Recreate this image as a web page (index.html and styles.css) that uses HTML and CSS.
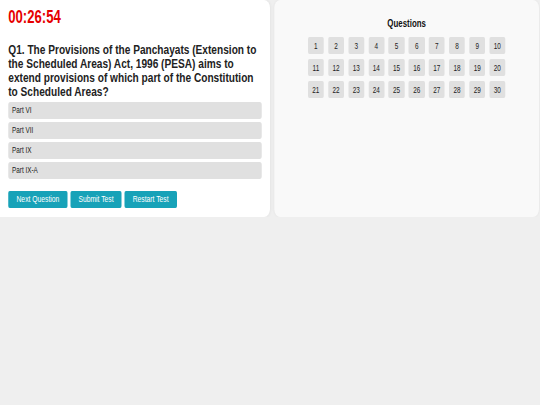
FILE: index.html
```html
<!DOCTYPE html>
<html lang="en">
<head>
    <meta charset="UTF-8" />
    <meta name="viewport" content="width=device-width, initial-scale=1.0" />
    <title>Quiz Test</title>
    <link rel="stylesheet" href="styles.css">
</head>
<body>
    <div class="quiz-layout">

        <!-- Question card -->
        <div class="quiz-card">
            <div class="timer">00:26:54</div>
            <h2 class="question">Q1. The Provisions of the Panchayats (Extension to the Scheduled Areas) Act, 1996 (PESA) aims to extend provisions of which part of the Constitution to Scheduled Areas?</h2>

            <div class="options">
                <div class="option">Part VI</div>
                <div class="option">Part VII</div>
                <div class="option">Part IX</div>
                <div class="option">Part IX-A</div>
            </div>

            <div class="actions">
                <button class="btn">Next Question</button>
                <button class="btn">Submit Test</button>
                <button class="btn">Restart Test</button>
            </div>
        </div>

        <!-- Question navigator -->
        <div class="nav-panel">
            <h3>Questions</h3>
            <div class="q-grid">
                <button>1</button><button>2</button><button>3</button><button>4</button><button>5</button>
                <button>6</button><button>7</button><button>8</button><button>9</button><button>10</button>
                <button>11</button><button>12</button><button>13</button><button>14</button><button>15</button>
                <button>16</button><button>17</button><button>18</button><button>19</button><button>20</button>
                <button>21</button><button>22</button><button>23</button><button>24</button><button>25</button>
                <button>26</button><button>27</button><button>28</button><button>29</button><button>30</button>
            </div>
        </div>

    </div>
</body>
</html>
```

FILE: styles.css
```css
/* --- Reset --- */
* {
    margin: 0;
    padding: 0;
    box-sizing: border-box;
}

body {
    font-family: "Liberation Sans", Arial, sans-serif;
    background-color: #efefef;
    color: #222;
}

/* --- Two column layout ---
   The page is drawn squeezed horizontally, so both columns share one grid
   cell and are narrowed from their own outer edge. */
.quiz-layout {
    display: grid;
    width: 540px;
}

.quiz-card,
.nav-panel {
    grid-area: 1 / 1;
    height: 217px;
    transform: scaleX(0.75);
}

/* --- Question card --- */
.quiz-card {
    justify-self: start;
    width: 360px;
    padding: 7px 11px 0 11px;
    background-color: #fff;
    border-radius: 0 8px 8px 0;
    box-shadow: 0 0 4px rgba(0, 0, 0, 0.08);
    transform-origin: left top;
}

.timer {
    font-size: 17.5px;
    line-height: 20px;
    font-weight: bold;
    color: #e60000;
}

.question {
    margin-top: 15.8px;
    font-size: 13.5px;
    line-height: 14.1px;
    font-weight: bold;
    color: #222;
}

.options {
    display: flex;
    flex-direction: column;
    gap: 3px;
    margin-top: 2.5px;
}

.option {
    height: 17px;
    line-height: 17px;
    padding-left: 5px;
    font-size: 8.5px;
    background-color: #e0e0e0;
    border-radius: 3px;
    color: #222;
}

.actions {
    display: flex;
    gap: 3.5px;
    margin-top: 12px;
}

.btn {
    height: 17.6px;
    padding: 0 11px;
    font-family: inherit;
    font-size: 9px;
    color: #fff;
    background-color: #17a2b8;
    border: none;
    border-radius: 2px;
}

/* --- Navigator panel --- */
.nav-panel {
    justify-self: end;
    width: 353px;
    margin-right: 1px;
    padding-top: 16.5px;
    background-color: #f9f9f9;
    border-radius: 8px;
    box-shadow: 0 0 3px rgba(0, 0, 0, 0.05);
    transform-origin: right top;
}

.nav-panel h3 {
    font-size: 10.5px;
    line-height: 12px;
    text-align: center;
    color: #111;
    margin-bottom: 8.5px;
}

.q-grid {
    display: grid;
    grid-template-columns: repeat(10, 21.3px);
    grid-auto-rows: 17px;
    column-gap: 5.6px;
    row-gap: 5px;
    justify-content: center;
}

.q-grid button {
    font-family: inherit;
    font-size: 8.5px;
    color: #222;
    background-color: #e0e0e0;
    border: none;
    border-radius: 2px;
}
```
